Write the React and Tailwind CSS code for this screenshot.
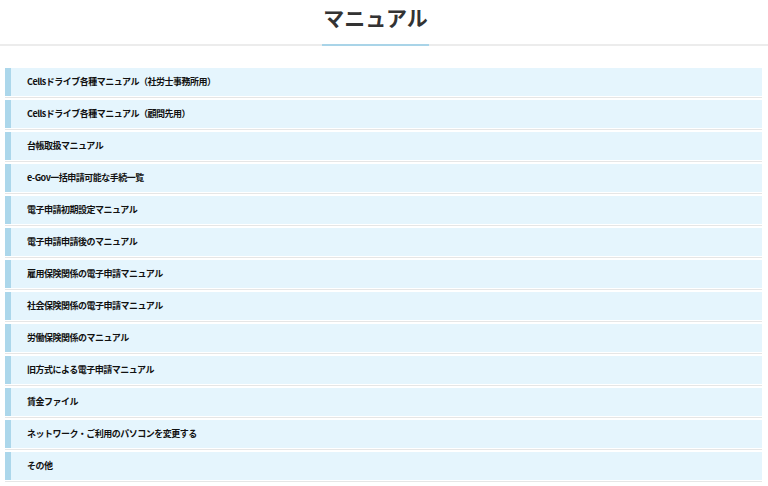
const items = [
  'Cellsドライブ各種マニュアル（社労士事務所用）',
  'Cellsドライブ各種マニュアル（顧問先用）',
  '台帳取扱マニュアル',
  'e-Gov一括申請可能な手続一覧',
  '電子申請初期設定マニュアル',
  '電子申請申請後のマニュアル',
  '雇用保険関係の電子申請マニュアル',
  '社会保険関係の電子申請マニュアル',
  '労働保険関係のマニュアル',
  '旧方式による電子申請マニュアル',
  '賃金ファイル',
  'ネットワーク・ご利用のパソコンを変更する',
  'その他',
];

export default function App() {
  return (
    <div
      className="w-[768px] h-[486px] overflow-hidden bg-white text-[#111]"
      style={{ fontFamily: '"Noto Sans CJK JP", "Noto Sans", sans-serif' }}
    >
      <div className="h-[44px] flex items-center justify-center pr-[17px]">
        <h1 className="text-[21px] font-bold text-[#333] leading-none -mt-[10px]">マニュアル</h1>
      </div>
      <div className="relative h-[2px] bg-[#ececec]">
        <div className="absolute left-[322px] top-0 w-[107px] h-[2px] bg-[#a9d4e8]" />
      </div>

      <ul className="mt-[22px] px-[5px] pr-[6px]">
        {items.map((item) => (
          <li key={item} className="pb-px border-b border-[#e6e6e6] mb-[2px]">
            <a className="flex items-center h-[28px] bg-[#e5f5fd] border-l-[6px] border-[#acd7eb] pl-[16px] text-[9px] font-bold tracking-[-0.5px] cursor-pointer">
              {item}
            </a>
          </li>
        ))}
      </ul>
    </div>
  );
}
